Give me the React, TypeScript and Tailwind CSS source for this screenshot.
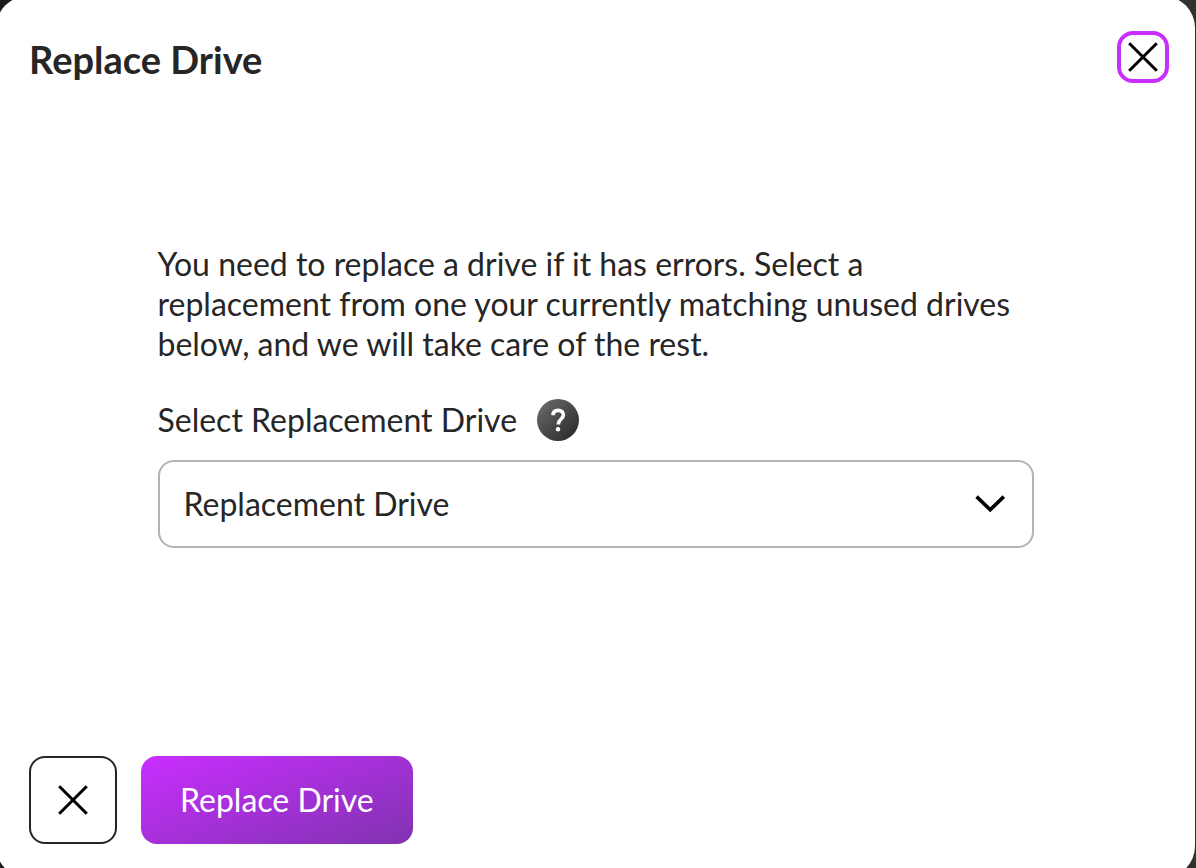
import React, { useState } from 'react'

const CrossIcon: React.FC = () => (
  <svg viewBox="0 0 32 32" className="w-8 h-8 shrink-0" fill="none" stroke="#000000" strokeWidth="3" aria-hidden="true">
    <path d="M2.2 2.2L29.8 29.8M29.8 2.2L2.2 29.8" />
  </svg>
)

const ChevronIcon: React.FC = () => (
  <svg
    viewBox="0 0 32 20"
    className="absolute right-7 top-[34px] w-8 h-5 pointer-events-none"
    fill="none"
    stroke="#000000"
    strokeWidth="3.6"
    aria-hidden="true"
  >
    <path d="M2.6 2.6L16.2 15.8L29.8 2.6" />
  </svg>
)

const App: React.FC = () => {
  const [drive, setDrive] = useState('')

  return (
    <div className="min-h-screen flex overflow-hidden bg-linear-to-r from-[#1c1c1e] to-[#303030] font-['Lato',sans-serif] text-[#262626]">
      <div
        role="dialog"
        aria-labelledby="dialog-title"
        className="flex-1 flex flex-col -mt-1 -ml-1 mr-px -mb-[10px] pt-[35px] pb-[34px] px-[26px] rounded-[32px] bg-white"
      >
        {/* Header */}
        <header className="flex items-start justify-between pl-[7px]">
          <h1 id="dialog-title" className="pt-[6px] text-[38px] leading-[44px] font-bold">
            Replace Drive
          </h1>
          <button
            aria-label="Close"
            className="w-[52px] h-[52px] flex items-center justify-center rounded-2xl border-4 border-[#c92eff]"
          >
            <CrossIcon />
          </button>
        </header>

        {/* Drive picker */}
        <main className="w-full max-w-[876px] mx-auto pt-[161px] pb-10 text-[32px] leading-10">
          <p>
            You need to replace a drive if it has errors. Select a replacement from one your currently matching unused
            drives below, and we will take care of the rest.
          </p>

          <div className="flex items-center gap-5 mt-[35px]">
            <label htmlFor="replacement-drive">Select Replacement Drive</label>
            <button
              aria-label="Help"
              className="w-[42px] h-[42px] flex items-center justify-center rounded-full bg-linear-to-br from-[#707070] to-[#262626]"
            >
              <svg viewBox="0 0 42 42" className="w-full h-full" fill="none" aria-hidden="true">
                <path
                  d="M15.8 16.2C16.2 13 18.2 11.4 21.2 11.4C24.4 11.4 26.4 13.3 26.4 16C26.4 20 21.2 20.2 21.2 25.6"
                  stroke="#ffffff"
                  strokeWidth="3.6"
                />
                <circle cx="21" cy="30.2" r="2.2" fill="#ffffff" />
              </svg>
            </button>
          </div>

          <div className="relative mt-[19px]">
            <select
              id="replacement-drive"
              value={drive}
              onChange={(e) => setDrive(e.target.value)}
              className="w-full h-[88px] pl-6 pr-20 appearance-none rounded-2xl border-2 border-[#b3b3b3] bg-white"
            >
              <option value="">Replacement Drive</option>
            </select>
            <ChevronIcon />
          </div>
        </main>

        {/* Actions */}
        <footer className="flex gap-6 mt-auto pl-[7px]">
          <button
            aria-label="Cancel"
            className="w-[88px] h-[88px] flex items-center justify-center rounded-2xl border-2 border-[#262626]"
          >
            <CrossIcon />
          </button>
          <button className="h-[88px] px-[39px] rounded-2xl bg-[linear-gradient(160deg,#c92eff,#8033b0)] text-[32px] leading-10 text-white">
            Replace Drive
          </button>
        </footer>
      </div>
    </div>
  )
}

export default App
